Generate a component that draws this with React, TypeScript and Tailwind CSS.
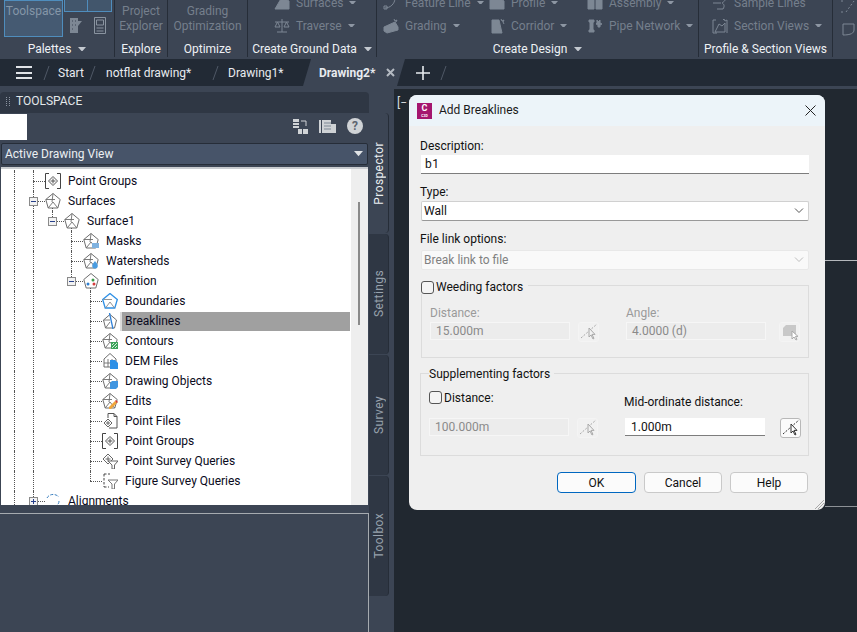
import React from "react";

const FONT = "[font-family:'Roboto','Noto_Sans',sans-serif]";

const S = ({ children, c = "#6e6e6e", w = 16, h = 16, vb = "0 0 16 16", className = "" }: any) => (
  <svg width={w} height={h} viewBox={vb} fill="none" stroke={c} strokeWidth="1" className={"shrink-0 " + className}>
    {children}
  </svg>
);

const Pent = ({ c = "#6e6e6e" }: { c?: string }) => (
  <>
    <path d="M8 .5 15.200 6.500 12.800 15H3.200L.8 6.500Z" stroke={c} />
    <path d="M.8 6.500H10M3.200 15 8 9 12.800 15M8 .5 7 9" stroke={c} strokeWidth=".9" />
  </>
);

const Diamond = () => (
  <path d="M8 3.500 12.500 8 8 12.500 3.500 8ZM8 5.500V10.500M5.500 8H10.500" stroke="#555" />
);

const icons: Record<string, React.ReactNode> = {
  surface: <S><Pent /></S>,
  masks: (
    <S><Pent /><path d="M9 10h7v5H9z" fill="#7fb2e0" stroke="none" /></S>
  ),
  water: (
    <S><Pent /><path d="M12 8c1.500 2 2.800 3.400 2.800 4.800a2.800 2.800 0 0 1-5.600 0c0-1.400 1.300-2.800 2.800-4.800Z" fill="#4a9ce0" stroke="none" /></S>
  ),
  definition: (
    <S>
      <path d="M8 .5 15.200 6.500 12.800 15H3.200L.8 6.500Z" />
      <circle cx="5" cy="11" r="1.500" fill="#2f7fd0" stroke="none" />
      <circle cx="10" cy="7" r="1.500" fill="#3a9a4a" stroke="none" />
      <circle cx="11" cy="11" r="1.500" fill="#d43c3c" stroke="none" />
    </S>
  ),
  boundaries: (
    <S><path d="M8 .5 15.300 6.500 12.800 15H3.200L.7 6.500Z" stroke="#2e90e6" strokeWidth="1.300" /><path d="M1.500 6.500H10M3.500 15 8 9 12.500 15" stroke="#888" strokeWidth=".9" /></S>
  ),
  breaklines: (
    <S><path d="M8 1.500 14.500 7 12.500 15H3.500L1.500 7Z" /><path d="M1.500 7H8M3.500 15 8 9" strokeWidth=".9" /><path d="M7.500 0 11 16" stroke="#2e80d8" strokeWidth="1.300" /></S>
  ),
  contours: (
    <S><Pent /><path d="M9 9h7v7H9z" fill="#3da35a" stroke="none" /><path d="M10 15l5-5M10 12l2-2M13 15l2-2" stroke="#fff" strokeWidth=".8" /></S>
  ),
  dem: (
    <S>
      <path d="M8 .5 14 6v8H2V6Z" />
      <path d="M2 10H12M6 6V14M10 6V14" strokeWidth=".9" />
      <path d="M8 7h5l3 3v6H8z" fill="#2e90e6" stroke="none" />
    </S>
  ),
  objects: (
    <S><Pent /><path d="M8 10l2-2h6v6l-2 2H8z" fill="#3f95e0" stroke="none" /></S>
  ),
  edits: (
    <S>
      <Pent />
      <path d="M7 14l6-6 2 2-6 6H7z" fill="#f0a63c" stroke="none" />
      <path d="M13 8l1-1 2 2-1 1z" fill="#d8352c" stroke="none" />
    </S>
  ),
  pfiles: (
    <S><path d="M6 5V.5h6l3 3V15H7" stroke="#555" /><path d="M12 .5v3h3" stroke="#555" /><path d="M6 6 10 10 6 14 2 10Z" stroke="#666" /><path d="M6 8V12M4 10H8" stroke="#666" /></S>
  ),
  pgroups: (
    <S><path d="M4 .5H.5V15.500H4M12 .5H15.500V15.500H12" stroke="#444" /><Diamond /></S>
  ),
  pquery: (
    <S>
      <path d="M6 1 11 6 6 11 1 6Z" stroke="#666" /><path d="M6 3.500V8.500M3.500 6H8.500" stroke="#666" />
      <path d="M6 8H16L12.500 12V16H10V12Z" fill="#fff" stroke="#666" />
    </S>
  ),
  fquery: (
    <S>
      <path d="M2 1v13M2 1h6M2 14h5" stroke="#444" strokeDasharray="2.500 1.500" />
      <path d="M6 7H16L12.500 11V16H10V11Z" fill="#fff" stroke="#777" />
    </S>
  ),
  align: (
    <S><path d="M2 5c2-4 8-5 12-1M14 8c0 4-4 7-9 5" stroke="#3a7fc0" strokeDasharray="3 1.500" /></S>
  ),
};

type Row = {
  d: number;
  label?: string;
  icon?: string;
  guides: number[];
  box?: "-" | "+";
  last?: boolean;
  sel?: boolean;
  stub?: boolean;
};

const rows: Row[] = [
  { d: 2, guides: [0, 1] },
  { d: 1, label: "Point Groups", icon: "pgroups", guides: [0] },
  { d: 1, label: "Surfaces", icon: "surface", guides: [0], box: "-", stub: true },
  { d: 2, label: "Surface1", icon: "surface", guides: [0, 1], box: "-", last: true, stub: true },
  { d: 3, label: "Masks", icon: "masks", guides: [0, 1] },
  { d: 3, label: "Watersheds", icon: "water", guides: [0, 1] },
  { d: 3, label: "Definition", icon: "definition", guides: [0, 1], box: "-", last: true, stub: true },
  { d: 4, label: "Boundaries", icon: "boundaries", guides: [0, 1] },
  { d: 4, label: "Breaklines", icon: "breaklines", guides: [0, 1], sel: true },
  { d: 4, label: "Contours", icon: "contours", guides: [0, 1] },
  { d: 4, label: "DEM Files", icon: "dem", guides: [0, 1] },
  { d: 4, label: "Drawing Objects", icon: "objects", guides: [0, 1] },
  { d: 4, label: "Edits", icon: "edits", guides: [0, 1] },
  { d: 4, label: "Point Files", icon: "pfiles", guides: [0, 1] },
  { d: 4, label: "Point Groups", icon: "pgroups", guides: [0, 1] },
  { d: 4, label: "Point Survey Queries", icon: "pquery", guides: [0, 1] },
  { d: 4, label: "Figure Survey Queries", icon: "fquery", guides: [0, 1], last: true },
  { d: 1, label: "Alignments", icon: "align", guides: [0], box: "+" },
];

function TreeRow({ r }: { r: Row }) {
  return (
    <div className="flex h-[20px] items-stretch">
      {Array.from({ length: r.d }).map((_, i) => (
        <div
          key={i}
          className={
            "w-[19px] shrink-0 " +
            (r.guides.includes(i) ? "border-l border-dotted border-[#555]" : "")
          }
        />
      ))}
      <div className="relative w-[12px] shrink-0">
        {r.label && (
          <>
            <div
              className={
                "absolute left-0 top-0 w-0 border-l border-dotted border-[#555] " +
                (r.last ? "h-[10px]" : "h-[20px]")
              }
            />
            <div className="absolute left-0 top-[10px] h-0 w-[12px] border-t border-dotted border-[#555]" />
          </>
        )}
        {r.box && (
          <div className="absolute -left-[4px] top-[6px] flex h-[9px] w-[9px] items-center justify-center border border-[#8a8a8a] bg-[#f2f2f2]">
            <div className="h-px w-[5px] bg-[#27408b]" />
            {r.box === "+" && <div className="absolute h-[5px] w-px bg-[#27408b]" />}
          </div>
        )}
      </div>
      <div className="relative flex w-[16px] shrink-0 items-center">
        {r.icon && icons[r.icon]}
        {r.stub && (
          <div className="absolute left-[7px] top-[17px] h-[3px] w-0 border-l border-dotted border-[#555]" />
        )}
      </div>
      {r.label && (
        <div
          className={
            "ml-[2px] mr-px flex flex-1 items-center text-[12px] leading-[20px] " +
            (r.sel
              ? "mt-px h-[19px] self-start border-l-2 border-[#dcdcdc] bg-[#a0a0a0] pb-[2px] pl-[3px] text-[#0a0a20]"
              : "pl-[5px] text-[#0a0a20]")
          }
        >
          {r.label}
        </div>
      )}
    </div>
  );
}

/* ribbon */
const Caret = ({ c = "#8d96a3", w = 7 }: { c?: string; w?: number }) => (
  <svg width={w} height={w * 0.57} viewBox="0 0 7 4" className="shrink-0"><path d="M0 0H7L3.500 4Z" fill={c} /></svg>
);

const Ri = ({ kind }: { kind: string }) => {
  const c = "#7d8794";
  const m: Record<string, React.ReactNode> = {
    surfaces: <path d="M1 14 8 2l7 4v8Z" fill={c} />,
    traverse: <path d="M8 1V14M3 14H13M1 4H15M3.500 4 1 9h5ZM12.500 4 10 9h5Z" stroke={c} fill="none" />,
    feature: <path d="M2 13C7 13 12 9 12 3M1 11h3v3H1zM11 1h3v3h-3z" stroke={c} fill="none" />,
    grading: <path d="M1 9 12 4l3 5v3L4 15 1 13ZM11 1l1 2 2-1-1 2" fill={c} />,
    profile: <path d="M1 14V5l5-3 3 3 3-1 3 2v8Z" fill={c} />,
    corridor: <path d="M3 2 H10 L13 15H3ZM12 1l1 2 2-1-1 2 1 2" fill={c} />,
    assembly: <path d="M1 5h6v9H1zM9 5h6v9H9zM6 1h4v3H6z" fill={c} />,
    pipe: <path d="M2 2h5v2H6v8h1v2H2v-2h1V4H2zM10 2l1 2 2-2 0 3 2 1-2 1v2h-2V7L9 6l1-1Z" fill={c} />,
    sample: <path d="M1 8H9M5 3h8c1 3-2 4-3 5 2 1 3 3 1 6H5" stroke={c} fill="none" />,
    section: <path d="M3 14 7 6l3 2 3-3v9ZM1 2v13h4M15 2v13M1 2h3M11 2l1-1 1 2 2-1" stroke={c} fill="none" />,
  };
  return <S c={c}>{m[kind]}</S>;
};

const Tool = ({ icon, label, dd = true }: { icon: string; label: string; dd?: boolean }) => (
  <div className="flex h-[23px] shrink-0 items-center gap-[6px] whitespace-nowrap text-[12px] text-[#757f8c]">
    <Ri kind={icon} />
    <span>{label}</span>
    {dd && <Caret />}
  </div>
);

const Group = ({ w, label, caret, children, className = "" }: any) => (
  <div className={"flex h-[57px] shrink-0 flex-col border-r border-[#262d38] " + className} style={{ width: w }}>
    <div className="relative h-[41px] overflow-hidden">{children}</div>
    <div className="flex h-[16px] items-center justify-center gap-[7px] whitespace-nowrap text-[12px] leading-[16px] text-[#eef1f4]">
      {label}
      {caret && <Caret c="#c4c9d0" w={8} />}
    </div>
  </div>
);

const Rows = ({ children, className = "" }: any) => (
  <div className={"flex h-[41px] flex-col justify-end pb-[4px] " + className}>{children}</div>
);

const Slash = ({ className = "" }: { className?: string }) => (
  <svg width="7" height="16" viewBox="0 0 7 16" className={"shrink-0 " + className}><path d="M6 1 1 15" stroke="#4f5866" /></svg>
);

const Pick = ({ dim = false }: { dim?: boolean }) => {
  const c = dim ? "#a9a9a9" : "#333";
  return (
    <svg width="18" height="18" viewBox="0 0 18 18" fill="none">
      <path d="M1 15 17 1" stroke={c} strokeDasharray="2 1.500" />
      <path d="M9 5v9l2-2 2 4 1-.6-2-4h3Z" fill={dim ? "#f1f1f1" : "#fff"} stroke={c} />
    </svg>
  );
};

const Field = ({ v, dim }: { v: string; dim?: boolean }) => (
  <div
    className={
      "flex h-[18px] w-[140px] items-center text-[12px] " +
      (dim
        ? "border border-[#f6f6f6] bg-[#ececec] pl-[5px] text-[#8a8a8a]"
        : "border-b border-[#7d7d7d] bg-white pl-[6px] text-[#111]")
    }
  >
    {v}
  </div>
);

const PickBtn = ({ dim, cube }: { dim?: boolean; cube?: boolean }) => (
  <div
    className={
      "flex h-[20px] w-[21px] shrink-0 items-center justify-center rounded-[3px] border " +
      (dim ? "border-[#f4f4f4] bg-[#f1f1f1]" : "border-[#b8b8b8] bg-[#fbfbfb]")
    }
  >
    {cube ? (
      <svg width="18" height="18" viewBox="0 0 18 18">
        <path d="M2 5 5 2h10v11H2Z" fill="#c8c8c8" />
        <path d="M11 8v8l2-2 2 3 1-.6-1.600-3h2.600Z" fill="#fff" stroke="#a9a9a9" />
      </svg>
    ) : (
      <Pick dim={dim} />
    )}
  </div>
);

const Check = ({ className = "h-[13px] w-[13px]" }: { className?: string }) => (
  <div className={"shrink-0 rounded-[3px] border border-[#555] bg-[#f4f4f4] " + className} />
);

const Chevron = ({ c = "#555" }: { c?: string }) => (
  <svg width="10" height="6" viewBox="0 0 10 6" fill="none" stroke={c}><path d="M1 .5 5 4.500 9 .5" /></svg>
);

const Btn = ({ label, primary }: { label: string; primary?: boolean }) => (
  <div
    className={
      "flex h-[21px] items-center justify-center rounded-[4px] border bg-[#fbfbfb] text-[12px] text-[#111] " +
      (primary ? "w-[79px] border-[#0067c0]" : "w-[78px] border-[#c9c9c9]")
    }
  >
    {label}
  </div>
);

const VTab = ({ label, active }: { label: string; active?: boolean }) => (
  <div
    className={
      "mb-px flex h-[120px] w-[20px] items-center justify-center rounded-r-[4px] border-r border-[#262d38] text-[12px] " +
      (active ? "bg-[#3c4554] text-[#e9edf0]" : "bg-[#2f3744] text-[#98a2ad]")
    }
  >
    <span className="rotate-180 tracking-[0.4px] [writing-mode:vertical-rl]">{label}</span>
  </div>
);

export default function App() {
  return (
    <div className={"relative flex h-[632px] w-[857px] flex-col overflow-hidden bg-[#3c4554] " + FONT}>
      {/* ribbon */}
      <div className="flex h-[59px] shrink-0 items-start bg-[#3c4554]">
        <Group w={115} label="Palettes" caret>
          <div className="flex h-[41px]">
            <div className="ml-[4px] flex h-[37px] w-[59px] items-start justify-center border border-[#4f8dbd] bg-[#455a72] pt-[1px] text-[12px] text-[#8496a8]">
              Toolspace
            </div>
            <div className="ml-[1px] flex flex-col">
              <div className="flex h-[12px]">
                <div className="w-[24px] border border-t-0 border-[#4f8dbd] bg-[#42566c]" />
                <div className="w-[24px] border border-l-0 border-t-0 border-[#4f8dbd] bg-[#42566c]" />
              </div>
              <div className="mt-[5px] flex w-[48px] justify-around">
                <svg width="14" height="17" viewBox="0 0 14 17" className="shrink-0"><path d="M1 1h8v3h4L9 9v7H1z" fill="#7d8794" /><path d="M3 4h1M6 4h1M3 8h1M6 8h1M3 12h1" stroke="#3c4554" /></svg>
                <svg width="14" height="17" viewBox="0 0 14 17" fill="none" stroke="#8a94a0" className="shrink-0"><path d="M1.500.5h11v16h-11zM3.500 3h7v5h-7zM3.500 11h7M3.500 14h7" /></svg>
              </div>
            </div>
          </div>
        </Group>
        <Group w={53} label="Explore">
          <div className="flex h-[41px] flex-col items-center pt-[4px] text-center text-[12px] leading-[15px] text-[#757f8c]">
            <span>Project</span>
            <span>Explorer</span>
          </div>
        </Group>
        <Group w={80} label="Optimize">
          <div className="flex h-[41px] flex-col items-center pt-[4px] text-center text-[12px] leading-[15px] text-[#757f8c]">
            <span>Grading</span>
            <span>Optimization</span>
          </div>
        </Group>
        <Group w={129} label="Create Ground Data" caret>
          <Rows className="pl-[26px]">
            <Tool icon="surfaces" label="Surfaces" />
            <Tool icon="traverse" label="Traverse" />
          </Rows>
        </Group>
        <Group w={322} label="Create Design" caret>
          <div className="flex">
            <Rows className="w-[112px] pl-[6px]">
              <Tool icon="feature" label="Feature Line" />
              <Tool icon="grading" label="Grading" />
            </Rows>
            <Rows className="w-[98px]">
              <Tool icon="profile" label="Profile" />
              <Tool icon="corridor" label="Corridor" />
            </Rows>
            <Rows>
              <Tool icon="assembly" label="Assembly" />
              <Tool icon="pipe" label="Pipe Network" />
            </Rows>
          </div>
        </Group>
        <Group w={134} label="Profile & Section Views">
          <Rows className="pl-[13px]">
            <Tool icon="sample" label="Sample Lines" dd={false} />
            <Tool icon="section" label="Section Views" />
          </Rows>
        </Group>
        <div className="flex h-[41px] flex-col justify-end pb-[4px] pl-[7px]">
          <S c="#7d8794"><path d="M1 3h2M1 14h3M6 14 14 3" strokeDasharray="2 2" /></S>
          <div className="h-[7px] shrink-0" />
          <S c="#7d8794"><path d="M3 3H14V9C14 12 11 14 3 14Z" /></S>
        </div>
      </div>

      {/* tabs */}
      <div className="relative flex h-[27px] shrink-0 items-center bg-[#222a35] text-[12px] text-[#e8ebef]">
        <div className="ml-[16px] flex w-[16px] shrink-0 flex-col gap-[3.500px]">
          <div className="h-[2px] bg-[#e0e3e7]" />
          <div className="h-[2px] bg-[#e0e3e7]" />
          <div className="h-[2px] bg-[#e0e3e7]" />
        </div>
        <Slash className="ml-[11px]" />
        <span className="ml-[8px] w-[24px] whitespace-nowrap">Start</span>
        <Slash className="ml-[7px]" />
        <span className="ml-[10px] w-[87px] whitespace-nowrap">notflat drawing*</span>
        <Slash className="ml-[19px]" />
        <span className="ml-[9px] w-[55px] whitespace-nowrap">Drawing1*</span>
        <div className="ml-[20px] flex h-[27px] w-[102px] shrink-0 items-center bg-[#3c4554] pl-[16px] font-bold [clip-path:polygon(8px_0,100%_0,calc(100%-8px)_100%,0_100%)]">
          <span className="w-[60px] whitespace-nowrap">Drawing2*</span>
          <svg width="9" height="9" viewBox="0 0 9 9" stroke="#b4bac2" strokeWidth="2" className="ml-[7px] shrink-0"><path d="M1 1 8 8M8 1 1 8" /></svg>
        </div>
        <svg width="14" height="14" viewBox="0 0 14 14" stroke="#e8ebef" strokeWidth="1.600" className="ml-[11px] shrink-0"><path d="M7 0V14M0 7H14" /></svg>
        <Slash className="ml-[10px]" />
      </div>

      {/* main */}
      <div className="flex min-h-0 flex-1 pt-[3px]">
        <div className="flex w-[394px] shrink-0 pt-[3px]">
          <div className="flex w-[369px] shrink-0 flex-col">
            <div className="flex h-[21px] shrink-0 items-center gap-[6px] rounded-t-[4px] bg-[#2f3744] pb-[3px] pl-[6px] text-[12px] text-[#e3e7ea]">
              <div className="h-[9px] w-[4px] border-x border-dotted border-[#8a93a0]" />
              TOOLSPACE
            </div>
            <div className="flex h-[30px] shrink-0 items-start justify-between">
              <div className="mt-px h-[26px] w-[27px] bg-white" />
              <div className="mr-[6px] mt-[5px] flex items-center gap-[11px]">
                <svg width="15" height="15" viewBox="0 0 15 15" fill="#d0d3d6">
                  <path d="M0 0h6v3H0zM0 4h6v2H0zM0 7h6v2H0zM5 10h4v5H5zM10 10h5v5h-5z" />
                  <path d="M8 2h5v5" fill="none" stroke="#d0d3d6" />
                </svg>
                <svg width="17" height="15" viewBox="0 0 17 15" fill="#cfd2d5">
                  <path d="M0 1h2v13H0zM3 1h14v13H3z" />
                  <path d="M5 4h7M5 7h7M5 10h7" stroke="#7d8794" />
                  <path d="M12 0h5v5h-5z" fill="#3c4554" />
                </svg>
                <div className="flex h-[16px] w-[16px] items-center justify-center rounded-full bg-[#d0d3d6] text-[12px] font-bold leading-none text-[#5d6570]">?</div>
              </div>
            </div>
            <div className="mx-px flex h-[22px] shrink-0 items-center justify-between rounded-[2px] border border-[#262d38] bg-[#475469] pl-[3px] pr-[4px] text-[12px] text-[#eceff2]">
              Active Drawing View
              <Caret c="#e0e3e6" w={9} />
            </div>
            <div className="mx-px mt-[2px] flex h-[338px] shrink-0 overflow-hidden border-t-2 border-[#c9ccd0] bg-white">
              <div className="min-w-0 flex-1 overflow-hidden pl-[13px]">
                <div className="-mt-[18px]">
                  {rows.map((r, i) => (
                    <TreeRow key={i} r={r} />
                  ))}
                </div>
              </div>
              <div className="w-[17px] shrink-0 bg-[#eeeeee] pl-[7px] pt-[33px]">
                <div className="h-[123px] w-[2px] bg-[#8a8a8a]" />
              </div>
            </div>
            <div className="mt-[8px] flex-1 border-r border-t border-[#a6abb0] bg-[#3c4554]" />
          </div>
          <div className="flex w-[25px] shrink-0 flex-col pt-[21px]">
            <VTab label="Prospector" active />
            <VTab label="Settings" />
            <VTab label="Survey" />
            <VTab label="Toolbox" />
          </div>
        </div>
        {/* canvas */}
        <div className="relative flex-1 bg-[#212830]">
          <div className="ml-[3px] mt-[6px] text-[12px] leading-[16px] text-[#d8dbdf]">[−</div>
          <div className="absolute right-0 top-[171px] h-px w-[32px] bg-[#b5b8bc]" />
          <div className="absolute right-0 top-[417px] h-px w-[32px] bg-[#8d9196]" />
        </div>
      </div>

      {/* dialog */}
      <div className="absolute left-[409px] top-[95px] flex h-[415px] w-[416px] flex-col overflow-hidden rounded-[8px] bg-[#efefef]">
        <div className="flex h-[31px] shrink-0 items-center bg-[#ecf4f9] pl-[8px] pr-[9px]">
          <div className="relative flex h-[16px] w-[15px] shrink-0 flex-col items-center bg-[#a5166f] text-white">
            <span className="text-[9px] font-bold leading-[11px]">C</span>
            <span className="text-[3.500px] font-bold leading-[4px]">C3D</span>
          </div>
          <span className="ml-[7px] flex-1 pb-px text-[12px] text-[#1a1a1a]">Add Breaklines</span>
          <svg width="11" height="11" viewBox="0 0 11 11" stroke="#222" strokeWidth="1"><path d="M.5.5 10.500 10.500M10.500.5.5 10.500" /></svg>
        </div>
        <div className="relative flex flex-1 flex-col pl-[11px] pr-[16px] pt-[11px] text-[12px] text-[#111]">
          <div className="h-[18px] leading-[18px]">Description:</div>
          <div className="ml-px flex h-[19px] items-center border-b border-[#7d7d7d] bg-white pl-[4px] tracking-[0.5px]">b1</div>
          <div className="mt-[9px] h-[18px] leading-[18px]">Type:</div>
          <div className="ml-px flex h-[20px] items-center justify-between rounded-[2px] border border-[#d0d0d0] border-b-[#999] bg-white pl-[2px] pr-[4px]">
            Wall
            <Chevron />
          </div>
          <div className="mt-[9px] h-[19px] leading-[19px]">File link options:</div>
          <div className="ml-px mt-px flex h-[20px] items-center justify-between rounded-[2px] border border-[#e8e8e8] bg-[#f9f9f9] pl-[2px] pr-[4px] text-[#808080]">
            Break link to file
            <Chevron c="#bdbdbd" />
          </div>

          {/* weeding */}
          <div className="ml-px mt-[15px] h-[73px] border border-[#dcdcdc] pl-[8px] pr-[8px]">
            <div className="-ml-[9px] -mt-[6px] flex h-[14px] w-fit items-center gap-[2px] bg-[#efefef] pr-[5px]">
              <Check />
              <span>Weeding factors</span>
            </div>
            <div className="mt-[10px] flex">
              <div className="w-[196px]">
                <div className="h-[18px] leading-[18px] text-[#9a9a9a]">Distance:</div>
                <div className="flex gap-[8px]"><Field v="15.000m" dim /><PickBtn dim /></div>
              </div>
              <div>
                <div className="h-[18px] leading-[18px] text-[#9a9a9a]">Angle:</div>
                <div className="flex gap-[13px]"><Field v="4.0000 (d)" dim /><PickBtn dim cube /></div>
              </div>
            </div>
          </div>

          {/* supplementing */}
          <div className="mt-[15px] h-[83px] border border-[#dcdcdc] pl-[8px] pr-[7px]">
            <div className="-mt-[9px] h-[18px] w-fit bg-[#efefef] pr-[4px] leading-[18px]">Supplementing factors</div>
            <div className="mt-[2px] flex">
              <div className="w-[196px]">
                <div className="mt-[3px] flex h-[21px] items-center gap-[2px] pb-[2px]"><Check className="h-[13px] w-[13px]" /><span>Distance:</span></div>
                <div className="mt-[9px] flex gap-[8px]"><Field v="100.000m" dim /><PickBtn dim /></div>
              </div>
              <div>
                <div className="mt-[7px] flex h-[20px] items-center">Mid-ordinate distance:</div>
                <div className="ml-px mt-[6px] flex gap-[15px]"><Field v="1.000m" /><PickBtn /></div>
              </div>
            </div>
          </div>

          <div className="mt-[16px] flex justify-end gap-[8px] pr-px">
            <Btn label="OK" primary />
            <Btn label="Cancel" />
            <Btn label="Help" />
          </div>
          <svg width="11" height="11" viewBox="0 0 11 11" stroke="#a8a8a8" className="absolute bottom-0 right-0">
            <path d="M1 10 10 1M4 10 10 4M7 10 10 7" />
          </svg>
        </div>
      </div>
    </div>
  );
}
